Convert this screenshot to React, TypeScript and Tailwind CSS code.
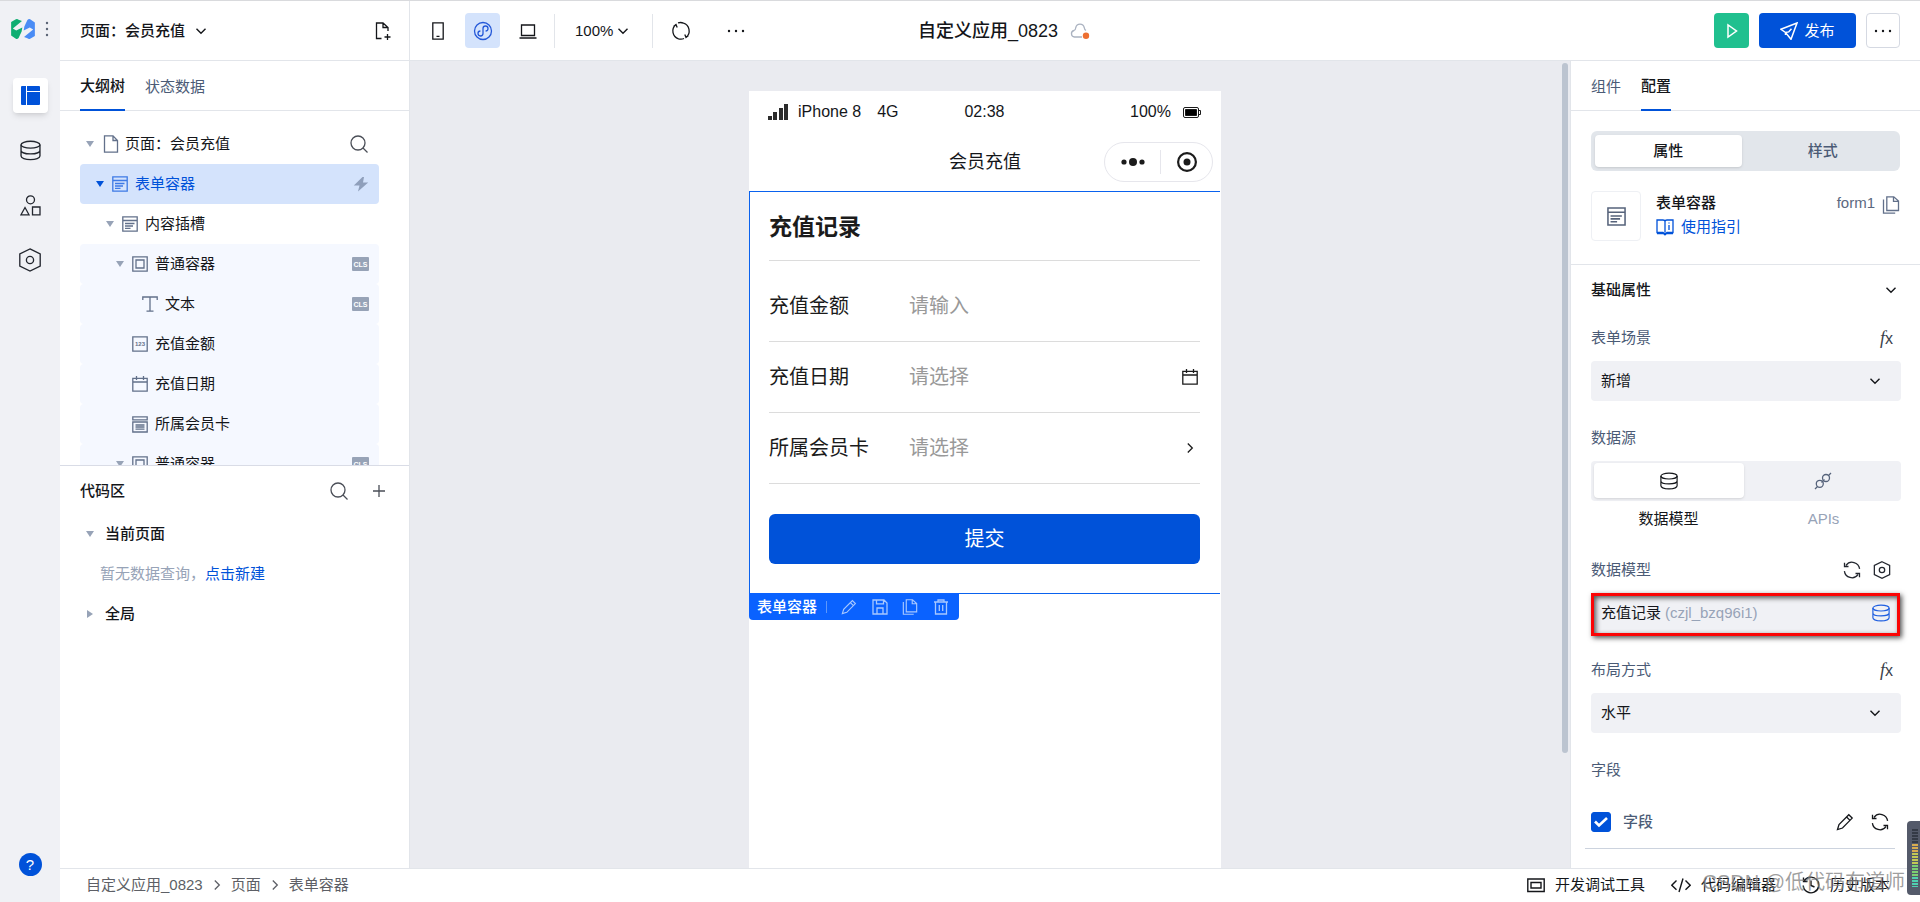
import { useState, type ReactNode } from 'react';
import clsx from 'clsx';

type IconProps = { className?: string; children?: ReactNode; box?: number; width?: number };

function Svg({ className, children, box = 20, width = 1.3 }: IconProps) {
  return (
    <svg
      viewBox={`0 0 ${box} ${box}`}
      className={clsx('shrink-0', className ?? 'size-5')}
      fill="none"
      stroke="currentColor"
      strokeWidth={width}
      aria-hidden="true"
    >
      {children}
    </svg>
  );
}

const Chevron = ({ className }: IconProps) => (
  <Svg box={12} width={1.4} className={className ?? 'size-3'}>
    <path d="M1.5 3.8 6 8.3l4.5-4.5" />
  </Svg>
);

const ChevronRight = ({ className }: IconProps) => (
  <Svg box={12} width={1.3} className={className ?? 'size-3'}>
    <path d="M3.8 1.5 8.3 6l-4.5 4.5" />
  </Svg>
);

const Database = ({ className }: IconProps) => (
  <Svg className={className}>
    <ellipse cx="10" cy="4.5" rx="9" ry="3.3" />
    <path d="M1 4.5v10.8c0 1.9 4 3.4 9 3.4s9-1.5 9-3.4V4.5M1 9.900c0 1.900 4 3.300 9 3.300s9-1.400 9-3.300" />
  </Svg>
);

const Hexagon = ({ className, width = 1.2 }: IconProps) => (
  <Svg className={className} width={width}>
    <path d="M10 .8 18.5 5v10L10 19.2 1.5 15V5z" />
    <circle cx="10" cy="10" r="3" />
  </Svg>
);

const Search = ({ className }: IconProps) => (
  <Svg className={className} width={1.3}>
    <circle cx="9" cy="9" r="7" />
    <path d="m14 14 4.5 4.5" />
  </Svg>
);

const FormIcon = ({ className }: IconProps) => (
  <Svg box={16} className={className ?? 'size-4'}>
    <path d="M.8.8h14.400v14.400H.8zM.8 4.500h14.400M3 7.500h9.500M3 10h8M3 12.400h5.500" />
  </Svg>
);

const ContainerIcon = () => (
  <Svg box={16} className="size-4">
    <path d="M.8.8h14.400v14.400H.8zM4 4h8v8H4z" />
  </Svg>
);

const Calendar = ({ className }: IconProps) => (
  <Svg box={16} className={className ?? 'size-4'}>
    <path d="M.8 2.300h14.400v12.900H.8zM.8 6h14.400M4.500 0v4M11.500 0v4" />
  </Svg>
);

const PageIcon = () => (
  <Svg box={18} className="size-[18px]">
    <path d="M2.500.8h8.500L15.500 5.500v11.700h-13zM11 .8v4.700h4.500" />
  </Svg>
);

const Copy = ({ className }: IconProps) => (
  <Svg box={18} className={className ?? 'size-[18px]'}>
    <path d="M4.800.8h7L16.500 5v9.500H4.800zM11.500.8V5.300h5M1.500 3.500v13.700h11.700" />
  </Svg>
);

const Pencil = ({ className }: IconProps) => (
  <Svg box={18} className={className ?? 'size-[18px]'}>
    <path d="M1.500 16.500 3 11.500 12.800 1.700l3.400 3.400L6.500 15zM10.600 4l3.400 3.400" />
  </Svg>
);

const Sync = ({ className }: IconProps) => (
  <Svg box={18} className={className ?? 'size-[18px]'}>
    <path d="M3 4.300a7.600 7.600 0 0 1 13.600 3.600M15 13.700A7.600 7.600 0 0 1 1.400 10.100M1.500 1.800v3.700h4M16.500 16.200v-3.700h-4" />
  </Svg>
);

const TextIcon = () => (
  <Svg box={16} className="size-4">
    <path d="M.8 4V1h14.400v3M8 1v14M4.500 15.200h7" />
  </Svg>
);

const NumberIcon = () => (
  <Svg box={16} className="size-4">
    <path d="M.8.8h14.400v14.400H.8z" />
    <text x="8" y="10.200" fontSize="6" fontWeight="700" textAnchor="middle" fill="currentColor" stroke="none">
      123
    </text>
  </Svg>
);

const SelectIcon = () => (
  <Svg box={17} className="size-[17px]">
    <path d="M.8.800h14.400v3H.8zM.8 6h14.400v10H.8zM3.500 9h9M3.500 11h9M3.500 13.200h9" />
  </Svg>
);

const Dots = ({ className }: IconProps) => (
  <svg viewBox="0 0 18 4" className={clsx('w-[18px] h-1', className)} fill="currentColor" aria-hidden="true">
    <circle cx="2" cy="2" r="1.2" />
    <circle cx="9" cy="2" r="1.2" />
    <circle cx="16" cy="2" r="1.2" />
  </svg>
);

const Caret = ({ closed, className }: { closed?: boolean; className?: string }) => (
  <svg viewBox="0 0 8 6" className={clsx('w-2 h-[6px] shrink-0', closed && '-rotate-90', className)} fill="currentColor" aria-hidden="true">
    <path d="M0 0h8L4 6z" />
  </svg>
);

const Fx = () => (
  <button aria-label="表达式" className="mr-2 flex items-baseline leading-5 text-[#3a3f4a]">
    <i className="font-['Liberation_Serif',serif] text-lg leading-5">f</i>
    <span className="text-base leading-5">x</span>
  </button>
);

type Node = { label: string; indent: string; icon: ReactNode; caret?: boolean; cls?: boolean; tinted?: boolean; active?: boolean };

const TREE: Node[] = [
  { label: '表单容器', indent: 'pl-4', icon: <FormIcon />, caret: true, active: true },
  { label: '内容插槽', indent: 'pl-[26px]', icon: <FormIcon />, caret: true },
  { label: '普通容器', indent: 'pl-9', icon: <ContainerIcon />, caret: true, cls: true, tinted: true },
  { label: '文本', indent: 'pl-[46px]', icon: <TextIcon />, cls: true, tinted: true },
  { label: '充值金额', indent: 'pl-9', icon: <NumberIcon />, tinted: true },
  { label: '充值日期', indent: 'pl-9', icon: <Calendar />, tinted: true },
  { label: '所属会员卡', indent: 'pl-9', icon: <SelectIcon />, tinted: true },
  { label: '普通容器', indent: 'pl-9', icon: <ContainerIcon />, caret: true, cls: true, tinted: true },
];

function TreeRow({ node }: { node: Node }) {
  return (
    <button
      className={clsx(
        'flex h-10 w-full shrink-0 items-center rounded pr-[10px] text-left',
        node.indent,
        node.active && 'bg-[#d4e3fc] text-[#0052d9]',
        node.tinted && 'bg-[#f5f8ff]',
      )}
    >
      <span className={clsx('flex w-4 items-center', node.active ? 'text-[#0052d9]' : 'text-[#97a3b7]')}>
        {node.caret && <Caret />}
      </span>
      <span className={clsx('flex w-[23px] items-center', node.active ? 'text-[#3d7ae5]' : 'text-[#62708a]')}>{node.icon}</span>
      <span className="flex-1">{node.label}</span>
      {node.cls && (
        <span className="flex h-[14px] w-[17px] items-center justify-center rounded-[1px] bg-[#97a3b7] text-[7px] leading-none font-bold text-white">CLS</span>
      )}
      {node.active && (
        <svg viewBox="0 0 16 16" className="size-4 text-[#8f9fbb]" fill="currentColor" aria-hidden="true">
          <path d="M9.500 1 .8 9.500h5.700L5 15.500 15.200 6.500H10L11 1z" />
        </svg>
      )}
    </button>
  );
}

function Rail() {
  return (
    <aside className="flex w-15 shrink-0 flex-col items-center bg-[#f0f1f5] text-[#22262e]">
      <div className="flex h-14 items-center gap-[10px]">
        <svg viewBox="0 0 70 59" className="h-5 w-6" aria-hidden="true">
          <path d="M0 9 14 1q4-2 8 1l10 4L5 28l10 6 18-9-2 12-9 19q-4 4-8 2L0 49z" fill="#0fae72" />
          <path d="M70 50 56 58q-4 2-8-1l-10-4 27-22-10-6-18 9 2-12 9-19q4-4 8-2l14 9z" fill="#4a8cf5" />
        </svg>
        <svg viewBox="0 0 4 16" className="h-4 w-1 text-[#5b6475]" fill="currentColor" aria-hidden="true">
          <circle cx="2" cy="2" r="1.2" />
          <circle cx="2" cy="8" r="1.2" />
          <circle cx="2" cy="14" r="1.2" />
        </svg>
      </div>
      <button aria-label="页面布局" className="mt-[21px] flex size-[35px] items-center justify-center rounded bg-white text-[#0052d9] shadow-md">
        <svg viewBox="0 0 19 19" className="size-[19px]" fill="currentColor" aria-hidden="true">
          <path d="M0 1q0-1 1-1h4v19H1q-1 0-1-1zM6 0h12q1 0 1 1v4H6zM6 6h13v12q0 1-1 1H6z" />
        </svg>
      </button>
      <button aria-label="数据" className="mt-[27px]">
        <Database className="size-[21px]" />
      </button>
      <button aria-label="组件" className="mt-[34px]">
        <Svg box={21} className="size-[21px]">
          <circle cx="10.5" cy="4.8" r="4" />
          <path d="M5 12.500 9 19.800H1zM12.500 12h7.500v7.800h-7.500z" />
        </Svg>
      </button>
      <button aria-label="设置" className="mt-8">
        <Hexagon className="size-6" width={1.1} />
      </button>
      <button aria-label="帮助" className="mt-auto mb-[26px] flex size-[23px] items-center justify-center rounded-full bg-[#0052d9] text-[15px] leading-none text-white">
        ?
      </button>
    </aside>
  );
}

function Header() {
  return (
    <header className="flex h-15 shrink-0 items-center border-b border-[#e2e5ea] bg-white">
      <div className="flex h-full flex-1 items-center pr-4">
        <div className="flex h-full w-[350px] items-center border-r border-[#e2e5ea] pr-4 pl-5">
          <button className="flex items-center gap-[10px] font-medium">
            页面：会员充值 <Chevron />
          </button>
          <button aria-label="新建页面" className="ml-auto">
            <Svg className="size-5">
              <path d="M8.500 17.500H3.500V2H10l5 4.500V10M10 2v4.500h5M14.500 13v6M11.500 16h6" />
            </Svg>
          </button>
        </div>
        <button aria-label="手机" className="ml-[18px]">
          <Svg box={20}>
            <path d="M4.800 1.800h10.400v16.400H4.800zM8.500 15.300h3" />
          </Svg>
        </button>
        <button aria-label="小程序" className="ml-[17px] flex size-[35px] items-center justify-center rounded bg-[#d4e3fc] text-[#2458d8]">
          <Svg className="size-5">
            <circle cx="10" cy="10" r="8.500" />
            <path d="M10 7.500v5a2.500 2.500 0 1 1-2.600-2.500M10 12.500v-5A2.500 2.500 0 1 1 12.600 10" />
          </Svg>
        </button>
        <button aria-label="电脑" className="ml-[18px]">
          <Svg>
            <path d="M3.500 4h13v10.500h-13zM1.500 17h17" />
          </Svg>
        </button>
        <span className="ml-4 h-[34px] w-px bg-[#e2e5ea]" />
        <button className="ml-5 flex items-center gap-1">
          100% <Chevron />
        </button>
        <span className="ml-[23px] h-[34px] w-px bg-[#e2e5ea]" />
        <button aria-label="刷新" className="ml-[18px]">
          <Svg className="size-5">
            <path d="M4.700 3.800A8.200 8.200 0 0 0 7.500 17.800M15.300 16.200A8.200 8.200 0 0 0 12.500 2.200M7 1.900q3-.9 5.500.3M7.500 17.800q3 .9 5.500-.3M2.500 5.500 5 3.500l1.200 3M17.500 14.500 15 16.500l-1.200-3" />
          </Svg>
        </button>
        <button aria-label="更多" className="ml-9">
          <Dots />
        </button>
      </div>
      <h1 className="relative text-lg font-medium">
        自定义应用_0823
        <span className="absolute top-1 left-full ml-3">
          <Svg className="size-5 text-[#aab2c0]">
            <path d="M12 16H4.500A3.300 3.300 0 0 1 4 9.500Q5.500 9 5.800 6.500A4.300 4.300 0 0 1 14.200 6.500Q14.500 8.800 16 9.500" />
            <circle cx="16" cy="14.800" r="3.200" fill="#ed6f31" stroke="none" />
          </Svg>
        </span>
      </h1>
      <div className="flex flex-1 items-center justify-end pr-5">
        <button aria-label="预览" className="flex size-[35px] items-center justify-center rounded bg-[#20c08f] text-white">
          <Svg box={16} width={1.5} className="size-4">
            <path d="M4 2v12l8.500-6z" />
          </Svg>
        </button>
        <button className="ml-[10px] flex h-[35px] w-[97px] items-center justify-center gap-[6px] rounded bg-[#0052d9] text-white">
          <Svg box={18} width={1.5} className="size-[18px]">
            <path d="M17 1 .9 7.300l4.600 3.200L11 17.300zM5.500 10.500l3.200-.6 2.800-3.200M5.500 10.500v2.500" />
          </Svg>
          发布
        </button>
        <button aria-label="更多操作" className="ml-[10px] flex h-[35px] w-[34px] items-center justify-center rounded border border-[#d5d9e2]">
          <Dots />
        </button>
      </div>
    </header>
  );
}

function LeftPanel() {
  return (
    <section className="flex w-[350px] shrink-0 flex-col border-r border-[#e2e5ea] bg-white">
      <div className="flex h-[50px] shrink-0 gap-5 border-b border-[#e2e5ea] px-5">
        <button className="-mb-px border-b-2 border-[#0052d9] pt-[2px] font-medium">大纲树</button>
        <button className="pt-[2px] text-[#4b5b76]">状态数据</button>
      </div>
      <div className="flex h-[354px] shrink-0 flex-col overflow-hidden pt-[13px] pr-[30px] pl-5">
        <div className="flex h-10 shrink-0 items-center pr-[10px] pl-[6px]">
          <Caret className="text-[#97a3b7]" />
          <span className="ml-2 flex w-[23px] text-[#62708a]">
            <PageIcon />
          </span>
          <span className="flex-1">页面：会员充值</span>
          <button aria-label="搜索组件" className="text-[#4a4e57]">
            <Search className="size-5" />
          </button>
        </div>
        {TREE.map((node, i) => (
          <TreeRow key={i} node={node} />
        ))}
      </div>
      <div className="flex flex-1 flex-col border-t border-[#d9dce6] pr-5 pl-5">
        <div className="flex h-12 items-center pt-[2px]">
          <h2 className="flex-1 font-medium">代码区</h2>
          <button aria-label="搜索代码" className="text-[#4a4e57]">
            <Search />
          </button>
          <button aria-label="新增代码" className="ml-5 text-[#4a4e57]">
            <Svg className="size-5">
              <path d="M10 4v12M4 10h12" />
            </Svg>
          </button>
        </div>
        <button className="flex h-10 items-center pl-[6px] font-medium">
          <Caret className="mr-[11px] text-[#97a3b7]" />
          当前页面
        </button>
        <p className="flex h-10 items-center pl-5 text-[#97a3b7]">
          暂无数据查询，
          <a href="#new" className="text-[#0052d9]">点击新建</a>
        </p>
        <button className="flex h-10 items-center pl-[6px] font-medium">
          <Caret closed className="mr-[11px] text-[#97a3b7]" />
          全局
        </button>
      </div>
    </section>
  );
}

function Phone() {
  return (
    <div className="flex w-[472px] flex-col bg-white">
      <div className="grid h-[42px] grid-cols-3 items-center pr-5 pl-[19px] text-base">
        <div className="flex items-center">
          <svg viewBox="0 0 20 16" className="mr-[10px] h-4 w-5 text-[#2c2c2c]" fill="currentColor" aria-hidden="true">
            <path d="M0 12h4v4H0zM5 8h4v8H5zM11 4h4v12h-4zM16 0h4v16h-4z" />
          </svg>
          iPhone 8<span className="ml-4">4G</span>
        </div>
        <span className="text-center">02:38</span>
        <div className="flex items-center justify-end gap-3">
          100%
          <svg viewBox="0 0 18 11" className="h-[11px] w-[18px]" fill="none" stroke="#1a1a1a" aria-hidden="true">
            <rect x=".5" y=".5" width="15" height="10" rx="1.5" />
            <path d="M2.500 2.500h11v6h-11z" fill="#000" />
            <path d="M16 3.500h1.500v4H16" />
          </svg>
        </div>
      </div>
      <div className="relative flex h-[58px] items-center justify-center text-lg">
        会员充值
        <div className="absolute top-[9px] right-2 flex h-10 w-[109px] items-center rounded-full border border-[#e6e6ec] text-[#1b1b1b]">
          <button aria-label="菜单" className="flex h-6 w-14 items-center justify-center border-r border-[#e6e6ec]">
            <svg viewBox="0 0 24 8" className="h-2 w-6" fill="currentColor" aria-hidden="true">
              <circle cx="3" cy="4" r="2.6" />
              <circle cx="12" cy="4" r="4" />
              <circle cx="21" cy="4" r="2.6" />
            </svg>
          </button>
          <button aria-label="关闭" className="flex h-6 flex-1 items-center justify-center">
            <svg viewBox="0 0 20 20" className="size-5" fill="none" stroke="currentColor" strokeWidth="2.2" aria-hidden="true">
              <circle cx="10" cy="10" r="8.9" />
              <circle cx="10" cy="10" r="3.5" fill="currentColor" stroke="none" />
            </svg>
          </button>
        </div>
      </div>
      <form className="relative mr-px border-y border-l border-[#0a62ee] pr-5 pb-[29px] pl-[19px] text-xl text-[#1b1b1b]" onSubmit={e => e.preventDefault()}>
        <h2 className="flex h-[69px] items-center border-b border-[#dcdcdc] pt-[2px] text-[23px] font-bold">充值记录</h2>
        <div className="mt-[10px] flex h-[71px] items-center border-b border-[#dcdcdc]">
          <label htmlFor="amount" className="w-[140px]">充值金额</label>
          <input id="amount" placeholder="请输入" className="min-w-0 flex-1 outline-none placeholder:text-[#999]" />
        </div>
        <div className="flex h-[71px] items-center border-b border-[#dcdcdc] pr-[2px]">
          <label htmlFor="date" className="w-[140px]">充值日期</label>
          <input id="date" readOnly placeholder="请选择" className="min-w-0 flex-1 outline-none placeholder:text-[#999]" />
          <Calendar />
        </div>
        <div className="flex h-[71px] items-center border-b border-[#dcdcdc] pr-1">
          <label htmlFor="card" className="w-[140px]">所属会员卡</label>
          <select id="card" className="min-w-0 flex-1 appearance-none text-[#999] outline-none">
            <option>请选择</option>
          </select>
          <ChevronRight />
        </div>
        <button className="mt-[30px] flex h-[50px] w-full items-center justify-center rounded-md bg-[#0052d9] text-white">提交</button>
        <div className="absolute top-full -left-px flex h-[27px] w-[210px] items-center rounded-b bg-[#0a62ff] pl-2 text-[15px] text-white">
          <span className="font-medium">表单容器</span>
          <span className="mr-[14px] ml-[9px] h-3 w-px bg-[#5d98fc]" />
          <div className="flex flex-1 items-center justify-between pr-[10px] text-[#a8c8ff]">
            <button aria-label="编辑">
              <Pencil className="size-4" />
            </button>
            <button aria-label="保存">
              <Svg box={16} className="size-4">
                <path d="M1 1h11l3 3v11H1zM4.500 1v3.800h7V1M5 15V9h6v6" />
              </Svg>
            </button>
            <button aria-label="复制">
              <Copy className="size-4" />
            </button>
            <button aria-label="删除">
              <Svg box={16} className="size-4">
                <path d="M1 3h14M5 3V1h6v2M2.500 3v12h11V3M6.300 6v6M9.700 6v6" />
              </Svg>
            </button>
          </div>
        </div>
      </form>
    </div>
  );
}

function Field({ label, htmlFor, children }: { label: string; htmlFor?: string; children?: ReactNode }) {
  return (
    <div className="flex h-12 items-center pt-[2px] text-[#4b5b76]">
      <label htmlFor={htmlFor} className="flex-1">{label}</label>
      {children}
    </div>
  );
}

function PanelSelect({ id, value }: { id: string; value: string }) {
  return (
    <div className="relative mb-3">
      <select id={id} className="h-10 w-full appearance-none rounded bg-[#f0f1f5] px-[10px] outline-none">
        <option>{value}</option>
      </select>
      <Chevron className="pointer-events-none absolute top-[14px] right-5 size-3" />
    </div>
  );
}

function RightPanel() {
  const [checked, setChecked] = useState(true);

  return (
    <section className="flex w-[350px] shrink-0 flex-col overflow-hidden border-l border-[#e2e5ea] bg-white">
      <div className="flex h-[50px] shrink-0 gap-5 border-b border-[#e2e5ea] px-5">
        <button className="pt-[2px] text-[#4b5b76]">组件</button>
        <button className="-mb-px border-b-2 border-[#0052d9] pt-[2px] font-medium">配置</button>
      </div>
      <div className="border-b border-[#e2e5ea] px-5 pt-5 pb-[23px]">
        <div className="grid h-10 grid-cols-2 gap-2 rounded-md bg-[#e2e6eb] p-1">
          <button className="rounded-sm bg-white font-medium shadow-sm">属性</button>
          <button className="font-medium text-[#4b5b76]">样式</button>
        </div>
        <div className="mt-5 flex">
          <div className="flex size-[50px] items-center justify-center rounded border border-[#eef0f4] text-[#56637b]">
            <FormIcon className="size-[19px]" />
          </div>
          <div className="ml-[15px] flex-1">
            <h2 className="leading-6 font-medium">表单容器</h2>
            <a href="#guide" className="flex items-center gap-[7px] leading-6 text-[#0052d9]">
              <Svg box={18} className="size-[18px]">
                <path d="M9 3.500v11M1 2h6q2 0 2 1.500Q9 2 11 2h6v12.500h-6L9 16l-2-1.500H1zM13 7v5M13 4.500v1M1 15.500h6.500L9 16.800l1.500-1.300H17" />
              </Svg>
              使用指引
            </a>
          </div>
          <span className="leading-6 text-[#5b6880]">form1</span>
          <button aria-label="复制标识" className="ml-[7px] flex h-7 items-center text-[#62708a]">
            <Copy />
          </button>
        </div>
      </div>
      <div className="pr-[19px] pl-5">
        <div className="flex h-12 items-center pt-[2px] pr-1">
          <h2 className="flex-1 font-medium">基础属性</h2>
          <Chevron />
        </div>
        <Field label="表单场景" htmlFor="scene">
          <Fx />
        </Field>
        <PanelSelect id="scene" value="新增" />
        <Field label="数据源" />
        <div className="grid h-10 grid-cols-2 gap-1 rounded bg-[#f0f1f5] px-[3px] pt-[2px] pb-[3px]">
          <button aria-label="数据模型" className="flex items-center justify-center rounded bg-white shadow-sm">
            <Database className="size-[18px]" />
          </button>
          <button aria-label="APIs" className="flex items-center justify-center text-[#56637b]">
            <Svg box={18} className="size-[18px]">
              <path d="m1 17 2.500-2.500M14.500 3.500 17 1M10.500 7.500l-3 3" />
              <circle cx="5.800" cy="11.800" r="3.500" />
              <circle cx="12" cy="6" r="3.500" />
            </Svg>
          </button>
        </div>
        <div className="mb-2 grid h-9 grid-cols-2 items-center text-center">
          <span>数据模型</span>
          <span className="text-[#97a3b7]">APIs</span>
        </div>
        <Field label="数据模型">
          <button aria-label="刷新模型" className="mr-3 text-[#22262e]">
            <Sync />
          </button>
          <button aria-label="模型设置" className="mr-[10px] text-[#22262e]">
            <Hexagon className="size-[18px]" width={1.4} />
          </button>
        </Field>
        <button className="relative mb-3 flex h-10 w-full items-center rounded bg-[#f0f1f5] pr-[11px] pl-[10px]">
          充值记录
          <span className="ml-1 flex-1 text-left text-[#97a3b7]">(czjl_bzq96i1)</span>
          <Database className="size-[18px] text-[#1f5fe0]" />
          <span className="absolute top-0 right-px left-0 h-[43px] border-[3px] border-[#fb0505] shadow-[2px_2px_5px_#555,inset_2px_2px_5px_#555]" />
        </button>
        <Field label="布局方式" htmlFor="layout">
          <Fx />
        </Field>
        <PanelSelect id="layout" value="水平" />
        <Field label="字段" />
        <div className="mr-[6px] -ml-[6px] flex h-14 items-center border-b border-[#ccd3de] pt-[2px] pl-[6px]">
          <span className="relative flex size-5">
            <input
              id="fields"
              type="checkbox"
              checked={checked}
              onChange={e => setChecked(e.target.checked)}
              className="size-5 appearance-none rounded-[3px] border border-[#0052d9] checked:bg-[#0052d9]"
            />
            {checked && (
              <Svg box={20} width={2.6} className="pointer-events-none absolute inset-0 size-5 text-white">
                <path d="m4 9.500 4 4 8-7.500" />
              </Svg>
            )}
          </span>
          <label htmlFor="fields" className="ml-3 flex-1 font-medium text-[#4b5b76]">字段</label>
          <button aria-label="编辑字段">
            <Pencil />
          </button>
          <button aria-label="刷新字段" className="mr-[6px] ml-[17px]">
            <Sync />
          </button>
        </div>
      </div>
    </section>
  );
}

function Footer() {
  return (
    <footer className="flex h-[34px] shrink-0 items-center border-t border-[#e2e5ea] bg-white pr-[30px] pb-[2px] pl-[26px]">
      <nav className="flex flex-1 items-center gap-2 text-[#5d5f66]">
        <a href="#app">自定义应用_0823</a>
        <ChevronRight />
        <a href="#page">页面</a>
        <ChevronRight />
        <a href="#form">表单容器</a>
      </nav>
      <button className="flex items-center gap-[10px]">
        <Svg box={18} width={1.4} className="size-[18px]">
          <path d="M.8 3h16.400v12.500H.8zM4 6.500h10V12H4z" />
        </Svg>
        开发调试工具
      </button>
      <button className="ml-[26px] flex items-center gap-[10px]">
        <Svg width={1.4}>
          <path d="M5.500 5.500.8 10.200l4.700 4.600M14.500 5.500l4.700 4.700-4.700 4.600M12 3.500 8 17" />
        </Svg>
        代码编辑器
      </button>
      <button className="ml-[26px] flex items-center gap-[10px]">
        <Svg box={18} width={1.4} className="size-[18px]">
          <path d="M2 5.500a7.800 7.800 0 1 1-.8 4M1.500 1.500v4h4M9 4.500v5l3.500 1.500" />
        </Svg>
        历史版本
      </button>
    </footer>
  );
}

export default function App() {
  return (
    <div className="relative flex h-screen overflow-hidden border-t border-[#d9dadd] bg-white font-['Liberation_Sans','Noto_Sans_CJK_SC',sans-serif] text-[15px] leading-[22px] text-[#14161a]">
      <Rail />
      <div className="flex min-w-0 flex-1 flex-col">
        <Header />
        <div className="flex min-h-0 flex-1">
          <LeftPanel />
          <main className="relative flex min-w-0 flex-1 justify-center bg-[#eaebf0] pt-[30px] pr-[10px]">
            <Phone />
            <div className="absolute top-[2px] right-[2px] h-[690px] w-[6px] rounded-full bg-[#bcc4d0]" />
          </main>
          <RightPanel />
        </div>
        <Footer />
      </div>
      {/* watermark */}
      <div className="pointer-events-none absolute right-[15px] bottom-[6px] text-xl text-[#808080]/75">CSDN @低代码布道师</div>
      {/* level meter */}
      <div className="absolute right-0 bottom-[7px] h-[74px] w-[13px] rounded-l bg-[#545a6a] py-2 pl-[5px]">
        <svg viewBox="0 0 6 58" className="h-[58px] w-[6px]" aria-hidden="true">
          {Array.from({ length: 20 }, (_, i) => (
            <rect key={i} y={i * 3} width="6" height="2" fill={i < 5 ? '#343a46' : i < 8 ? '#d8ac50' : i < 12 ? '#c3c955' : i < 16 ? '#7ccf72' : '#4fd0b0'} />
          ))}
        </svg>
      </div>
    </div>
  );
}
